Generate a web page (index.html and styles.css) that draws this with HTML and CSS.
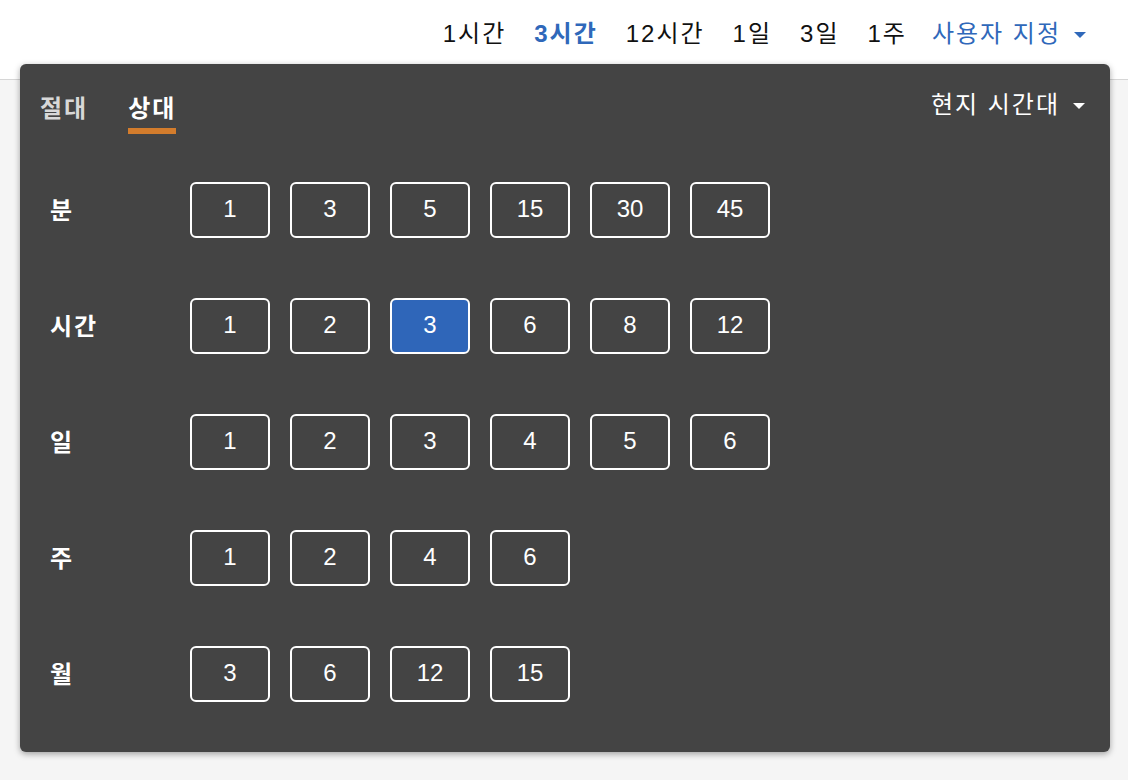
FILE: index.html
```html
<!DOCTYPE html>
<html lang="ko">
<head>
	<meta charset="UTF-8">
	<title>시간 범위</title>
	<link rel="stylesheet" href="styles.css">
</head>
<body>
	<div class="topbar">
		<a class="range">1시간</a>
		<a class="range on">3시간</a>
		<a class="range">12시간</a>
		<a class="range">1일</a>
		<a class="range">3일</a>
		<a class="range">1주</a>
		<a class="range custom">사용자 지정<span class="caret"></span></a>
	</div>

	<div class="panel">
		<div class="head">
			<div class="tabs">
				<span class="tab">절대</span>
				<span class="tab active">상대</span>
			</div>
			<div class="zone">현지 시간대<span class="caret"></span></div>
		</div>

		<div class="row">
			<div class="label">분</div>
			<div class="btns"><b>1</b><b>3</b><b>5</b><b>15</b><b>30</b><b>45</b></div>
		</div>
		<div class="row">
			<div class="label">시간</div>
			<div class="btns"><b>1</b><b>2</b><b class="sel">3</b><b>6</b><b>8</b><b>12</b></div>
		</div>
		<div class="row">
			<div class="label">일</div>
			<div class="btns"><b>1</b><b>2</b><b>3</b><b>4</b><b>5</b><b>6</b></div>
		</div>
		<div class="row">
			<div class="label">주</div>
			<div class="btns"><b>1</b><b>2</b><b>4</b><b>6</b></div>
		</div>
		<div class="row">
			<div class="label">월</div>
			<div class="btns"><b>3</b><b>6</b><b>12</b><b>15</b></div>
		</div>
	</div>
</body>
</html>
```

FILE: styles.css
```css
html,body{margin: 0;padding: 0;}
body{background: #f5f5f5;font-family: "Liberation Sans","Noto Sans CJK KR",sans-serif;height: 780px;position: relative;}

.topbar{height: 80px;background: #fff;border-bottom: 1px solid #d6d6d6;box-sizing: border-box;
	display: flex;justify-content: flex-end;align-items: center;gap: 28px;padding: 0 42px 12px 0;}
.range{font-size: 24px;color: #111;line-height: 30px;letter-spacing: 2px;}
.range.on{color: #2f68ba;font-weight: bold;}
.range.custom{color: #2f68ba;margin-left: -3px;display: flex;align-items: center;}
.caret{display: inline-block;width: 0;height: 0;border-left: 6px solid transparent;border-right: 6px solid transparent;
	border-top: 6px solid currentColor;margin-left: 13px;margin-top: 2px;}

.panel{position: absolute;left: 20px;top: 64px;width: 1090px;height: 688px;box-sizing: border-box;
	background: #444;border-radius: 6px;box-shadow: 0 2px 6px rgba(0,0,0,.35);color: #fff;
	padding: 0 25px 50px 20px;}
.head{display: flex;justify-content: space-between;align-items: flex-start;margin-top: 28px;}
.tabs{display: flex;gap: 40px;}
.tab{font-size: 24px;font-weight: bold;line-height: 30px;color: #d8d8d8;letter-spacing: 2px;
	padding-bottom: 6px;border-bottom: 6px solid transparent;margin-top: 2px;height: 28px;}
.tab.active{color: #fff;border-bottom-color: #d37c2c;margin-right: -2px;padding-right: 0;}
.zone{font-size: 24px;line-height: 30px;display: flex;align-items: center;margin-top: -2px;letter-spacing: 2px;}

.row{display: flex;align-items: center;margin-left: 10px;margin-top: 48px;}
.row + .row{margin-top: 60px;}
.label{width: 140px;font-size: 24px;font-weight: bold;letter-spacing: 2px;margin-top: -3px;}
.btns{display: flex;gap: 20px;}
.btns b{width: 80px;height: 56px;box-sizing: border-box;border: 2px solid #fff;border-radius: 6px;
	display: flex;align-items: center;justify-content: center;font-size: 24px;font-weight: normal;padding-bottom: 2px;}
.btns b.sel{background: #2f66b9;}
```
